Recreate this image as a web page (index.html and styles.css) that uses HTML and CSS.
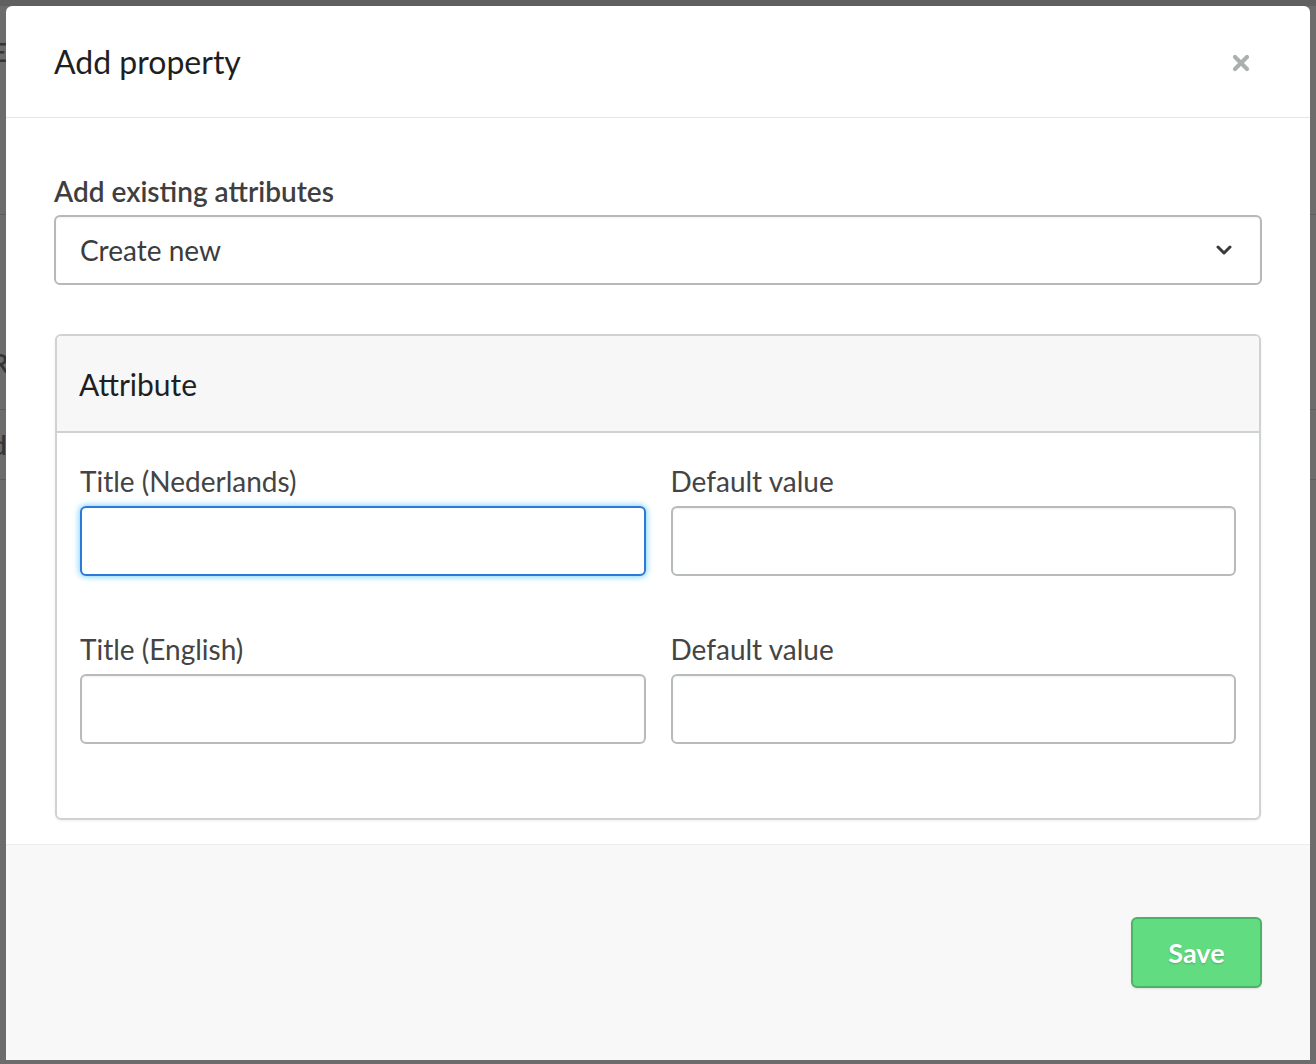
FILE: index.html
```html
<!DOCTYPE html>
<html lang="en">
<head>
<meta charset="utf-8">
<title>Add property</title>
<link rel="stylesheet" href="styles.css">
</head>
<body>
<div class="backdrop">
  <div class="bg-topbar"></div>
  <div class="bg-row bg-row-1"><span class="bg-letter">E</span></div>
  <div class="bg-row bg-row-2"></div>
  <div class="bg-row bg-row-3"><span class="bg-letter">R</span></div>
  <div class="bg-row bg-row-4"><span class="bg-letter">d</span></div>
</div>

<div class="modal">
  <div class="modal-header">
    <h4 class="modal-title">Add property</h4>
    <button class="close" type="button" aria-label="Close">
      <svg width="18" height="18" viewBox="0 0 18 18"><path d="M3 3 L15 15 M15 3 L3 15" stroke="#aab0b0" stroke-width="4.2" stroke-linecap="round" fill="none"/></svg>
    </button>
  </div>
  <div class="modal-body">
    <label class="field-label bold">Add existing attributes</label>
    <div class="select">
      <span>Create new</span>
      <svg width="16" height="12" viewBox="0 0 16 12"><path d="M2 3 L8 9 L14 3" stroke="#3a3a3a" stroke-width="3" fill="none" stroke-linecap="round" stroke-linejoin="round"/></svg>
    </div>

    <div class="panel">
      <div class="panel-heading">Attribute</div>
      <div class="panel-body">
        <div class="grid-row">
          <div class="field">
            <label class="field-label">Title (Nederlands)</label>
            <div class="input focus"></div>
          </div>
          <div class="field">
            <label class="field-label">Default value</label>
            <div class="input"></div>
          </div>
        </div>
        <div class="grid-row">
          <div class="field">
            <label class="field-label">Title (English)</label>
            <div class="input"></div>
          </div>
          <div class="field">
            <label class="field-label">Default value</label>
            <div class="input"></div>
          </div>
        </div>
      </div>
    </div>
  </div>
  <div class="modal-footer">
    <button class="btn-save" type="button">Save</button>
  </div>
</div>
</body>
</html>
```

FILE: styles.css
```css
* { box-sizing: border-box; }
html, body { margin: 0; padding: 0; }
body {
  width: 1316px;
  height: 1064px;
  background: #6b6c6b;
  font-family: Lato, "Open Sans", "Liberation Sans", sans-serif;
  overflow: hidden;
  position: relative;
}

/* dimmed page behind the modal */
.backdrop {
  display: flex;
  flex-direction: column;
  height: 100%;
}
.bg-topbar { height: 6px; background: #5f605f; }
.bg-row {
  border-bottom: 1px solid #5c5d5c;
  position: relative;
}
.bg-row-1 { height: 66px; border-bottom-color: transparent; }
.bg-row-2 { height: 143px; }
.bg-row-3 { height: 195px; }
.bg-row-4 { height: 70px; }
.bg-letter {
  position: absolute;
  left: -8px;
  font-size: 26px;
  line-height: 30px;
  color: #343534;
  font-weight: 600;
}
.bg-row-1 .bg-letter { top: 31px; }
.bg-row-3 .bg-letter { top: 133px; }
.bg-row-4 .bg-letter { top: 20px; }

/* modal */
.modal {
  position: absolute;
  left: 6px;
  top: 6px;
  width: 1304px;
  height: 1054px;
  background: #fff;
  border-radius: 6px 6px 0 0;
  display: flex;
  flex-direction: column;
}
.modal-header {
  height: 112px;
  padding: 0 48px;
  border-bottom: 1px solid #e5e5e5;
  display: flex;
  align-items: center;
  justify-content: space-between;
}
.modal-title {
  margin: 0;
  font-size: 32px;
  line-height: 40px;
  font-weight: 400;
  color: #1f1f1f;
  padding-top: 1px;
}
.close {
  border: 0;
  background: none;
  padding: 0;
  width: 18px;
  height: 18px;
  margin-right: 12px;
  margin-top: 2px;
  display: flex;
}

.modal-body {
  padding: 55px 48px 24px;
  border-bottom: 1px solid #ededed;
}
.field-label {
  display: block;
  font-size: 28px;
  line-height: 36px;
  color: #444;
  margin-bottom: 7px;
}
.field-label.bold {
  font-size: 28px;
  font-weight: 600;
  color: #3f3f3f;
  line-height: 36px;
  margin-bottom: 6px;
}
.select {
  height: 70px;
  border: 2px solid #b5b9b8;
  border-radius: 6px;
  display: flex;
  align-items: center;
  justify-content: space-between;
  padding: 0 28px 0 24px;
  font-size: 28px;
  color: #3c3c3c;
  box-shadow: inset 0 1px 2px rgba(0,0,0,0.05);
}
.select svg { display: block; }

.panel {
  margin: 49px 1px 0;
  border: 2px solid #cfd2d2;
  border-radius: 6px;
  box-shadow: 0 1px 3px rgba(0,0,0,0.06);
  overflow: hidden;
}
.panel-heading {
  height: 97px;
  background: #f7f7f7;
  border-bottom: 2px solid #cfd2d2;
  display: flex;
  align-items: center;
  padding: 0 22px;
  font-size: 30px;
  color: #1f1f1f;
  padding-bottom: 0;
}
.panel-body {
  padding: 30px 23px 74px;
  display: flex;
  flex-direction: column;
  gap: 55px;
}
.grid-row {
  display: grid;
  grid-template-columns: 1fr 1fr;
  gap: 25px;
}
.input {
  height: 70px;
  border: 2px solid #b8bbbb;
  border-radius: 6px;
  background: #fff;
  box-shadow: inset 0 1px 2px rgba(0,0,0,0.06);
}
.input.focus {
  border-color: #2c7ad6;
  box-shadow: 0 0 6px 1px #7fd3ff;
}

.modal-footer {
  flex: 1;
  background: #f8f8f8;
  display: flex;
  align-items: center;
  justify-content: flex-end;
  padding: 0 48px;
}
.btn-save {
  width: 131px;
  height: 71px;
  background: #62dc80;
  border: 2px solid #4cb265;
  border-radius: 6px;
  color: #fff;
  font-family: Lato, "Open Sans", "Liberation Sans", sans-serif;
  font-size: 27px;
  font-weight: 700;
  text-shadow: 0 1px 2px rgba(0,0,0,0.2);
  box-shadow: 0 1px 2px rgba(0,0,0,0.1);
}
```
